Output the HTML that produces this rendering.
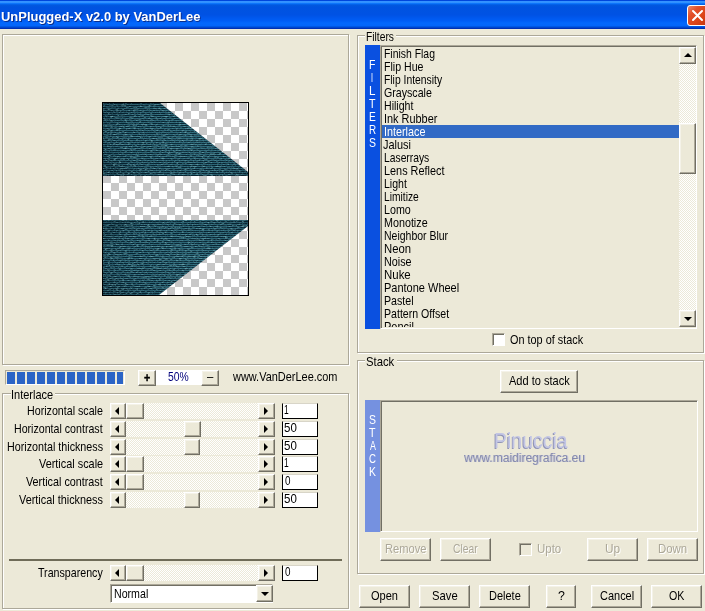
<!DOCTYPE html><html><head><meta charset="utf-8"><title>UnPlugged-X v2.0 by VanDerLee</title><style>
*{box-sizing:border-box;margin:0;padding:0}
html,body{width:705px;height:611px;overflow:hidden;background:#ECE9D8}
body{position:relative;font:13px/15px "Liberation Sans",sans-serif;color:#000}
.a{position:absolute}
.t{position:absolute;white-space:pre;transform-origin:0 0;line-height:15px}
#tx{position:absolute;left:0;top:0;width:705px;height:611px;will-change:transform;transform:translateZ(0)}
#title{left:0;top:0;width:705px;height:29px;background:linear-gradient(to bottom,#0046DC 0,#0046DC 1px,#3593FF 1.2px,#3090FF 2.6px,#127DFF 3.2px,#0468F4 4px,#0259DE 5px,#0053E0 7px,#0052E4 15px,#0058EE 18px,#005EF6 21px,#0468FC 23px,#0466FA 25.5px,#0058E6 26.5px,#0046CC 27.5px,#0030B4 28.5px,#0030B4 29px)}
#close{left:687px;top:5px;width:21px;height:21px;border:1px solid #fff;border-radius:3px;background:linear-gradient(135deg,#EC8A6A 0,#E2502A 30%,#DC4418 65%,#C23410 100%)}
.grp{border:1px solid #ACA899;box-shadow:1px 1px 0 #fff, inset 1px 1px 0 #fff}
.grp>b{position:absolute;top:-7px;background:#ECE9D8;height:13px}
.btn{background:#ECE9D8;border:1px solid;border-color:#fff #716F64 #716F64 #fff;box-shadow:inset -1px -1px 0 #ACA899, inset 1px 1px 0 #F4F2E8}
.sunk{border:1px solid;border-color:#ACA899 #fff #fff #ACA899;box-shadow:inset 1px 1px 0 #716F64}
.track{background:repeating-conic-gradient(#fff 0 25%,#ECE9D8 0 50%) 0 0/2px 2px}
.inp{background:#fff;border:1px solid #000;border-top-color:#D8D5C8}
.tri{width:0;height:0;border:solid transparent}
</style></head><body>
<div id="title" class="a"></div>
<div id="close" class="a"><svg width="19" height="19" viewBox="0 0 19 19" style="position:absolute;left:0;top:0"><path d="M5 5L14 14M14 5L5 14" stroke="#fff" stroke-width="2" stroke-linecap="round" fill="none"/></svg></div>
<div class="a grp" style="left:2px;top:34px;width:347px;height:331px"></div>
<svg class="a" style="left:102px;top:102px" width="147" height="194" viewBox="0 0 147 194">
<defs>
<pattern id="ck" width="16" height="16" patternUnits="userSpaceOnUse" x="1" y="1"><rect width="16" height="16" fill="#fff"/><rect x="8" width="8" height="8" fill="#C8C8C8"/><rect y="8" width="8" height="8" fill="#C8C8C8"/></pattern>
<pattern id="st" width="4" height="2" patternUnits="userSpaceOnUse" y="1"><rect width="4" height="2" fill="#2A6474"/><rect width="4" height="1" fill="#07212E"/></pattern>
<radialGradient id="rg" cx="0.6" cy="0.5" r="0.65"><stop offset="0" stop-color="#4A98A8" stop-opacity=".15"/><stop offset="0.6" stop-color="#20566A" stop-opacity=".03"/><stop offset="1" stop-color="#04141E" stop-opacity=".3"/></radialGradient>
<filter id="nz" x="0" y="0" width="100%" height="100%"><feTurbulence type="fractalNoise" baseFrequency="0.35 0.9" numOctaves="2" seed="7" result="n"/><feColorMatrix in="n" type="matrix" values="0 0 0 0 0.3  0 0 0 0 0.66  0 0 0 0 0.7  1.5 0 0 0 -0.72"/><feComposite in2="SourceGraphic" operator="in"/></filter>
<clipPath id="c1"><path d="M1 1H58L146 70V74H1Z"/></clipPath>
<clipPath id="c2"><path d="M1 118H146V124L57 193H1Z"/></clipPath>
</defs>
<rect width="147" height="194" fill="#000"/>
<rect x="1" y="1" width="145" height="192" fill="url(#ck)"/>
<g clip-path="url(#c1)"><rect x="1" y="1" width="145" height="73" fill="url(#st)"/><rect x="1" y="1" width="145" height="73" fill="url(#rg)"/><rect x="1" y="1" width="145" height="73" fill="#fff" filter="url(#nz)"/></g>
<g clip-path="url(#c2)"><rect x="1" y="118" width="145" height="75" fill="url(#st)"/><rect x="1" y="118" width="145" height="75" fill="url(#rg)"/><rect x="1" y="118" width="145" height="75" fill="#fff" filter="url(#nz)"/></g>
</svg>
<div class="a" style="left:5px;top:370px;width:120px;height:15px;border:1px solid;border-color:#ACA899 #fff #fff #ACA899"></div>
<div class="a" style="left:7px;top:372px;width:8px;height:12px;background:#2B64C6"></div>
<div class="a" style="left:17px;top:372px;width:8px;height:12px;background:#2B64C6"></div>
<div class="a" style="left:27px;top:372px;width:8px;height:12px;background:#2B64C6"></div>
<div class="a" style="left:37px;top:372px;width:8px;height:12px;background:#2B64C6"></div>
<div class="a" style="left:47px;top:372px;width:8px;height:12px;background:#2B64C6"></div>
<div class="a" style="left:57px;top:372px;width:8px;height:12px;background:#2B64C6"></div>
<div class="a" style="left:67px;top:372px;width:8px;height:12px;background:#2B64C6"></div>
<div class="a" style="left:77px;top:372px;width:8px;height:12px;background:#2B64C6"></div>
<div class="a" style="left:87px;top:372px;width:8px;height:12px;background:#2B64C6"></div>
<div class="a" style="left:97px;top:372px;width:8px;height:12px;background:#2B64C6"></div>
<div class="a" style="left:107px;top:372px;width:8px;height:12px;background:#2B64C6"></div>
<div class="a" style="left:117px;top:372px;width:6px;height:12px;background:#2B64C6"></div>
<div class="a" style="left:156px;top:370px;width:45px;height:15px;background:#fff"></div>
<div class="a btn" style="left:138px;top:370px;width:18px;height:16px"></div>
<div class="a btn" style="left:201px;top:370px;width:18px;height:16px"></div>
<div class="a grp" style="left:2px;top:393px;width:347px;height:216px"><b style="left:8px;width:44px"></b></div>
<div class="a track" style="left:110px;top:403px;width:165px;height:16px"></div>
<div class="a btn" style="left:110px;top:403px;width:16px;height:16px"><i class="a tri" style="left:4px;top:3px;border-width:4px 4px 4px 0;border-right-color:#000"></i></div>
<div class="a btn" style="left:258px;top:403px;width:17px;height:16px"><i class="a tri" style="left:5px;top:3px;border-width:4px 0 4px 4px;border-left-color:#000"></i></div>
<div class="a btn" style="left:126px;top:403px;width:18px;height:16px"></div>
<div class="a inp" style="left:282px;top:403px;width:36px;height:16px"></div>
<div class="a track" style="left:110px;top:421px;width:165px;height:16px"></div>
<div class="a btn" style="left:110px;top:421px;width:16px;height:16px"><i class="a tri" style="left:4px;top:3px;border-width:4px 4px 4px 0;border-right-color:#000"></i></div>
<div class="a btn" style="left:258px;top:421px;width:17px;height:16px"><i class="a tri" style="left:5px;top:3px;border-width:4px 0 4px 4px;border-left-color:#000"></i></div>
<div class="a btn" style="left:184px;top:421px;width:17px;height:16px"></div>
<div class="a inp" style="left:282px;top:421px;width:36px;height:16px"></div>
<div class="a track" style="left:110px;top:439px;width:165px;height:16px"></div>
<div class="a btn" style="left:110px;top:439px;width:16px;height:16px"><i class="a tri" style="left:4px;top:3px;border-width:4px 4px 4px 0;border-right-color:#000"></i></div>
<div class="a btn" style="left:258px;top:439px;width:17px;height:16px"><i class="a tri" style="left:5px;top:3px;border-width:4px 0 4px 4px;border-left-color:#000"></i></div>
<div class="a btn" style="left:184px;top:439px;width:16px;height:16px"></div>
<div class="a inp" style="left:282px;top:439px;width:36px;height:16px"></div>
<div class="a track" style="left:110px;top:456px;width:165px;height:16px"></div>
<div class="a btn" style="left:110px;top:456px;width:16px;height:16px"><i class="a tri" style="left:4px;top:3px;border-width:4px 4px 4px 0;border-right-color:#000"></i></div>
<div class="a btn" style="left:258px;top:456px;width:17px;height:16px"><i class="a tri" style="left:5px;top:3px;border-width:4px 0 4px 4px;border-left-color:#000"></i></div>
<div class="a btn" style="left:126px;top:456px;width:18px;height:16px"></div>
<div class="a inp" style="left:282px;top:456px;width:36px;height:16px"></div>
<div class="a track" style="left:110px;top:474px;width:165px;height:16px"></div>
<div class="a btn" style="left:110px;top:474px;width:16px;height:16px"><i class="a tri" style="left:4px;top:3px;border-width:4px 4px 4px 0;border-right-color:#000"></i></div>
<div class="a btn" style="left:258px;top:474px;width:17px;height:16px"><i class="a tri" style="left:5px;top:3px;border-width:4px 0 4px 4px;border-left-color:#000"></i></div>
<div class="a btn" style="left:126px;top:474px;width:18px;height:16px"></div>
<div class="a inp" style="left:282px;top:474px;width:36px;height:16px"></div>
<div class="a track" style="left:110px;top:492px;width:165px;height:16px"></div>
<div class="a btn" style="left:110px;top:492px;width:16px;height:16px"><i class="a tri" style="left:4px;top:3px;border-width:4px 4px 4px 0;border-right-color:#000"></i></div>
<div class="a btn" style="left:258px;top:492px;width:17px;height:16px"><i class="a tri" style="left:5px;top:3px;border-width:4px 0 4px 4px;border-left-color:#000"></i></div>
<div class="a btn" style="left:184px;top:492px;width:16px;height:16px"></div>
<div class="a inp" style="left:282px;top:492px;width:36px;height:16px"></div>
<div class="a track" style="left:110px;top:565px;width:165px;height:16px"></div>
<div class="a btn" style="left:110px;top:565px;width:16px;height:16px"><i class="a tri" style="left:4px;top:3px;border-width:4px 4px 4px 0;border-right-color:#000"></i></div>
<div class="a btn" style="left:258px;top:565px;width:17px;height:16px"><i class="a tri" style="left:5px;top:3px;border-width:4px 0 4px 4px;border-left-color:#000"></i></div>
<div class="a btn" style="left:126px;top:565px;width:18px;height:16px"></div>
<div class="a inp" style="left:282px;top:565px;width:36px;height:16px"></div>
<div class="a" style="left:9px;top:559px;width:333px;height:2px;background:#6F6C58"></div>
<div class="a sunk" style="left:110px;top:584px;width:163px;height:19px;background:#fff"></div>
<div class="a btn" style="left:256px;top:585px;width:17px;height:17px"><i class="a tri" style="left:4px;top:6px;border-width:4px 4px 0 4px;border-top-color:#000"></i></div>
<div class="a grp" style="left:357px;top:35px;width:347px;height:318px"><b style="left:7px;width:31px"></b></div>
<div class="a" style="left:365px;top:45px;width:15px;height:284px;background:#0A50E0"></div>
<div class="a sunk" style="left:380px;top:45px;width:317px;height:284px"></div>
<div class="a" style="left:382px;top:125px;width:297px;height:13px;background:#316AC5"></div>
<div class="a track" style="left:679px;top:47px;width:17px;height:280px"></div>
<div class="a btn" style="left:679px;top:47px;width:17px;height:17px"><i class="a tri" style="left:4px;top:5px;border-width:0 4px 4px 4px;border-bottom-color:#000"></i></div>
<div class="a btn" style="left:679px;top:310px;width:17px;height:17px"><i class="a tri" style="left:4px;top:6px;border-width:4px 4px 0 4px;border-top-color:#000"></i></div>
<div class="a btn" style="left:679px;top:123px;width:17px;height:51px"></div>
<div class="a sunk" style="left:492px;top:333px;width:13px;height:13px;background:#fff"></div>
<div class="a grp" style="left:357px;top:360px;width:347px;height:214px"><b style="left:7px;width:32px"></b></div>
<div class="a btn" style="left:500px;top:370px;width:78px;height:23px"></div>
<div class="a" style="left:365px;top:400px;width:15px;height:132px;background:#7591E0"></div>
<div class="a sunk" style="left:380px;top:400px;width:318px;height:132px"></div>
<div class="a btn" style="left:380px;top:538px;width:51px;height:23px"></div>
<div class="a btn" style="left:440px;top:538px;width:51px;height:23px"></div>
<div class="a btn" style="left:587px;top:538px;width:51px;height:23px"></div>
<div class="a btn" style="left:647px;top:538px;width:51px;height:23px"></div>
<div class="a sunk" style="left:519px;top:543px;width:13px;height:13px"></div>
<div class="a btn" style="left:359px;top:585px;width:51px;height:23px"></div>
<div class="a btn" style="left:419px;top:585px;width:51px;height:23px"></div>
<div class="a btn" style="left:479px;top:585px;width:51px;height:23px"></div>
<div class="a btn" style="left:546px;top:585px;width:30px;height:23px"></div>
<div class="a btn" style="left:591px;top:585px;width:51px;height:23px"></div>
<div class="a btn" style="left:651px;top:585px;width:51px;height:23px"></div>
<div id="tx">
<div class="a" style="left:0;top:0;width:679px;height:327px;overflow:hidden">
<span class="t" style="left:383.90px;top:46.0px;transform:scaleX(0.8012)">Finish Flag</span>
<span class="t" style="left:383.84px;top:59.0px;transform:scaleX(0.8142)">Flip Hue</span>
<span class="t" style="left:383.93px;top:72.0px;transform:scaleX(0.7956)">Flip Intensity</span>
<span class="t" style="left:384.32px;top:85.0px;transform:scaleX(0.8183)">Grayscale</span>
<span class="t" style="left:383.91px;top:98.0px;transform:scaleX(0.8141)">Hilight</span>
<span class="t" style="left:384.13px;top:111.0px;transform:scaleX(0.8393)">Ink Rubber</span>
<span class="t" style="left:384.15px;top:124.0px;color:#fff;transform:scaleX(0.8311)">Interlace</span>
<span class="t" style="left:383.23px;top:137.0px;transform:scaleX(0.8420)">Jalusi</span>
<span class="t" style="left:383.95px;top:150.0px;transform:scaleX(0.7933)">Laserrays</span>
<span class="t" style="left:384.30px;top:163.0px;transform:scaleX(0.8359)">Lens Reflect</span>
<span class="t" style="left:383.89px;top:176.0px;transform:scaleX(0.8120)">Light</span>
<span class="t" style="left:384.00px;top:189.0px;transform:scaleX(0.7882)">Limitize</span>
<span class="t" style="left:383.82px;top:202.0px;transform:scaleX(0.8237)">Lomo</span>
<span class="t" style="left:384.34px;top:215.0px;transform:scaleX(0.8266)">Monotize</span>
<span class="t" style="left:383.88px;top:228.0px;transform:scaleX(0.8066)">Neighbor Blur</span>
<span class="t" style="left:384.43px;top:241.0px;transform:scaleX(0.8697)">Neon</span>
<span class="t" style="left:384.32px;top:254.0px;transform:scaleX(0.8287)">Noise</span>
<span class="t" style="left:384.35px;top:267.0px;transform:scaleX(0.8803)">Nuke</span>
<span class="t" style="left:384.26px;top:280.0px;transform:scaleX(0.8456)">Pantone Wheel</span>
<span class="t" style="left:383.85px;top:293.0px;transform:scaleX(0.8188)">Pastel</span>
<span class="t" style="left:383.84px;top:306.0px;transform:scaleX(0.8143)">Pattern Offset</span>
<span class="t" style="left:384.33px;top:319.0px;transform:scaleX(0.8475)">Pencil</span>
</div>
<span class="t" style="left:10.65px;top:387.0px;transform:scaleX(0.8460)">Interlace</span>
<span class="t" style="left:26.76px;top:403.0px;transform:scaleX(0.8210)">Horizontal scale</span>
<span class="t" style="left:13.78px;top:421.0px;transform:scaleX(0.8174)">Horizontal contrast</span>
<span class="t" style="left:6.76px;top:439.0px;transform:scaleX(0.8255)">Horizontal thickness</span>
<span class="t" style="left:39.03px;top:456.0px;transform:scaleX(0.8372)">Vertical scale</span>
<span class="t" style="left:26.03px;top:474.0px;transform:scaleX(0.8299)">Vertical contrast</span>
<span class="t" style="left:19.03px;top:492.0px;transform:scaleX(0.8362)">Vertical thickness</span>
<span class="t" style="left:38.01px;top:565.0px;transform:scaleX(0.8198)">Transparency</span>
<span class="t" style="left:233.21px;top:369.0px;transform:scaleX(0.8422)">www.VanDerLee.com</span>
<span class="t" style="left:167.73px;top:369.0px;color:#00007B;transform:scaleX(0.7965)">50%</span>
<span class="t" style="left:144.29px;top:370.0px;font-weight:bold;-webkit-text-stroke:.5px #000;transform:scaleX(0.8199)">+</span>
<span class="t" style="left:206.98px;top:369.0px;transform:scaleX(0.8749)">–</span>
<span class="t" style="left:284.33px;top:402.0px;transform:scaleX(0.6507)">1</span>
<span class="t" style="left:283.51px;top:420.0px;transform:scaleX(0.8859)">50</span>
<span class="t" style="left:283.51px;top:438.0px;transform:scaleX(0.8859)">50</span>
<span class="t" style="left:284.33px;top:455.0px;transform:scaleX(0.6507)">1</span>
<span class="t" style="left:284.53px;top:473.0px;transform:scaleX(0.7596)">0</span>
<span class="t" style="left:283.51px;top:491.0px;transform:scaleX(0.8859)">50</span>
<span class="t" style="left:284.53px;top:564.0px;transform:scaleX(0.7596)">0</span>
<span class="t" style="left:113.87px;top:586.0px;transform:scaleX(0.8173)">Normal</span>
<span class="t" style="left:365.55px;top:29.0px;transform:scaleX(0.7895)">Filters</span>
<span class="t" style="left:365.98px;top:354.0px;transform:scaleX(0.8685)">Stack</span>
<span class="t" style="left:510.41px;top:332.0px;transform:scaleX(0.8363)">On top of stack</span>
<span class="t" style="left:508.71px;top:373.0px;transform:scaleX(0.8487)">Add to stack</span>
<span class="t" style="left:384.57px;top:541.0px;color:#ACA899;text-shadow:1px 1px 0 #fff;transform:scaleX(0.8570)">Remove</span>
<span class="t" style="left:452.93px;top:541.0px;color:#ACA899;text-shadow:1px 1px 0 #fff;transform:scaleX(0.7919)">Clear</span>
<span class="t" style="left:536.98px;top:541.0px;color:#ACA899;text-shadow:1px 1px 0 #fff;transform:scaleX(0.8831)">Upto</span>
<span class="t" style="left:604.87px;top:541.0px;color:#ACA899;text-shadow:1px 1px 0 #fff;transform:scaleX(0.9078)">Up</span>
<span class="t" style="left:657.84px;top:541.0px;color:#ACA899;text-shadow:1px 1px 0 #fff;transform:scaleX(0.8774)">Down</span>
<span class="t" style="left:370.56px;top:588.0px;transform:scaleX(0.8484)">Open</span>
<span class="t" style="left:431.97px;top:588.0px;transform:scaleX(0.8667)">Save</span>
<span class="t" style="left:488.67px;top:588.0px;transform:scaleX(0.8444)">Delete</span>
<span class="t" style="left:557.66px;top:588.0px;transform:scaleX(0.9501)">?</span>
<span class="t" style="left:599.94px;top:588.0px;transform:scaleX(0.8441)">Cancel</span>
<span class="t" style="left:669.07px;top:588.0px;transform:scaleX(0.8204)">OK</span>
<span class="t" style="left:368.93px;top:57.0px;color:#fff;transform:scaleX(0.8054)">F</span>
<span class="t" style="left:371.45px;top:70.0px;color:#fff;transform:scaleX(0.5500)">I</span>
<span class="t" style="left:368.72px;top:83.0px;color:#fff;transform:scaleX(0.8929)">L</span>
<span class="t" style="left:369.08px;top:96.0px;color:#fff;transform:scaleX(0.8176)">T</span>
<span class="t" style="left:368.66px;top:109.0px;color:#fff;transform:scaleX(0.7826)">E</span>
<span class="t" style="left:368.72px;top:122.0px;color:#fff;transform:scaleX(0.7566)">R</span>
<span class="t" style="left:369.01px;top:135.0px;color:#fff;transform:scaleX(0.8035)">S</span>
<span class="t" style="left:369.01px;top:412.0px;color:#fff;transform:scaleX(0.8035)">S</span>
<span class="t" style="left:369.08px;top:425.0px;color:#fff;transform:scaleX(0.8176)">T</span>
<span class="t" style="left:369.69px;top:438.0px;color:#fff;transform:scaleX(0.6830)">A</span>
<span class="t" style="left:369.32px;top:451.0px;color:#fff;transform:scaleX(0.7420)">C</span>
<span class="t" style="left:368.56px;top:464.0px;color:#fff;transform:scaleX(0.7993)">K</span>
<span class="t" style="left:1.08px;top:9.0px;font-size:13.5px;line-height:15px;font-weight:bold;color:#fff;text-shadow:1px 1px 0 #0A2E8C;transform:scaleX(0.9592)">UnPlugged-X v2.0 by VanDerLee</span>
<span class="t" style="left:493.52px;top:428.0px;font-size:22px;line-height:25px;color:#C2C5E4;text-shadow:-1px 1px 0 #9094B6;transform:scaleX(0.8853)">Pinuccia</span>
<span class="t" style="left:463.83px;top:451.0px;font-size:12px;line-height:14px;color:#8489AC;text-shadow:1px 0 0 #C4C6DC;transform:scaleX(1.0011)">www.maidiregrafica.eu</span>
</div>
</body></html>
